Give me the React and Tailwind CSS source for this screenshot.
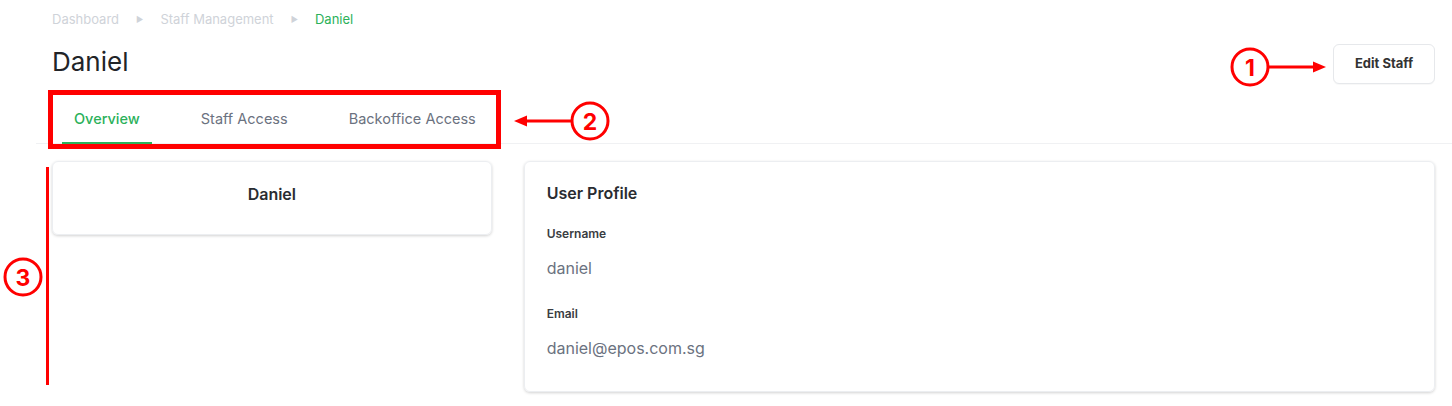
import React from "react";

const font = { fontFamily: "Inter, 'Noto Sans', sans-serif" };

function Annotations() {
  const red = "#ff0000";
  return (
    <svg
      className="absolute inset-0 pointer-events-none"
      width="1452"
      height="406"
      viewBox="0 0 1452 406"
    >
      {/* 1 */}
      <circle cx="1250" cy="67" r="18" fill="white" stroke={red} strokeWidth="3" />
      <text x="1250" y="75.5" textAnchor="middle" fontSize="23" fontWeight="700" fill={red} fontFamily="Inter, sans-serif">1</text>
      <line x1="1268" y1="67" x2="1316" y2="67" stroke={red} strokeWidth="3" />
      <path d="M1326 67 L1313 61.5 L1313 72.5 Z" fill={red} />

      {/* 2 */}
      <rect x="50.5" y="92.5" width="448" height="54" fill="none" stroke={red} strokeWidth="5" />
      <circle cx="590" cy="121" r="18" fill="white" stroke={red} strokeWidth="3" />
      <text x="590" y="129.5" textAnchor="middle" fontSize="23" fontWeight="700" fill={red} fontFamily="Inter, sans-serif">2</text>
      <line x1="572" y1="121" x2="524" y2="121" stroke={red} strokeWidth="3" />
      <path d="M514 121 L527 115.5 L527 126.5 Z" fill={red} />

      {/* 3 */}
      <circle cx="23" cy="277" r="18" fill="white" stroke={red} strokeWidth="3" />
      <text x="23" y="285.5" textAnchor="middle" fontSize="23" fontWeight="700" fill={red} fontFamily="Inter, sans-serif">3</text>
      <line x1="47.5" y1="167" x2="47.5" y2="385" stroke={red} strokeWidth="3" />
    </svg>
  );
}

export default function App() {
  const tabs = ["Overview", "Staff Access", "Backoffice Access"];
  return (
    <div className="relative w-[1452px] h-[406px] bg-white overflow-hidden" style={font}>
      <div className="pl-[52px] pr-[17px] pt-[9px]">
        <nav className="flex items-center text-[13px] leading-5 text-[#cfd3d9]">
          <span>Dashboard</span>
          <span className="mx-[17px] text-[8px]">▶</span>
          <span>Staff Management</span>
          <span className="mx-[17px] text-[8px]">▶</span>
          <span className="text-[#2bb15a]">Daniel</span>
        </nav>
        <div className="flex items-start justify-between mt-[15px]">
          <h1 className="text-[26px] leading-9 text-[#222428]">Daniel</h1>
          <button className="h-10 w-[102px] rounded-md border border-[#e6e8eb] bg-white text-[13px] font-bold text-[#333] shadow-[0_1px_1px_rgba(0,0,0,0.03)]">
            Edit Staff
          </button>
        </div>
      </div>

      <div className="ml-[36px] border-b border-[#f0f1f3] pl-[26px] flex gap-[37px] mt-[20px]">
        {tabs.map((t, i) => (
          <div
            key={t}
            className={
              i === 0
                ? "px-3 pb-[13px] pt-[5px] text-[14.5px] leading-5 font-medium text-[#2bb15a] border-b-2 border-[#2bb15a] -mb-px"
                : "px-3 pb-[13px] pt-[5px] text-[14.5px] leading-5 text-[#6b7280] border-b-2 border-transparent -mb-px"
            }
          >
            {t}
          </div>
        ))}
      </div>

      <div className="grid grid-cols-3 gap-8 pl-[52px] pr-[17px] mt-[17px] items-start">
        <div className="rounded-md border border-[#eceef1] shadow-[0_1px_3px_rgba(0,0,0,0.18)] pt-[20px] pb-[28px] text-center">
          <div className="text-[16px] leading-6 font-semibold text-[#2a2c31]">Daniel</div>
        </div>
        <div className="col-span-2 h-[231px] rounded-md border border-[#eceef1] shadow-[0_1px_3px_rgba(0,0,0,0.18)] px-[22px] pt-[19px]">
          <div className="text-[16px] leading-6 font-semibold text-[#2a2c31]">User Profile</div>
          <div className="mt-[20px] text-[12px] leading-[18px] font-semibold text-[#3a3d42]">Username</div>
          <div className="mt-[13px] text-[16px] leading-6 text-[#6b7280]">daniel</div>
          <div className="mt-[25px] text-[12px] leading-[18px] font-semibold text-[#3a3d42]">Email</div>
          <div className="mt-[13px] text-[16px] leading-6 text-[#6b7280]">daniel@epos.com.sg</div>
        </div>
      </div>

      <Annotations />
    </div>
  );
}
